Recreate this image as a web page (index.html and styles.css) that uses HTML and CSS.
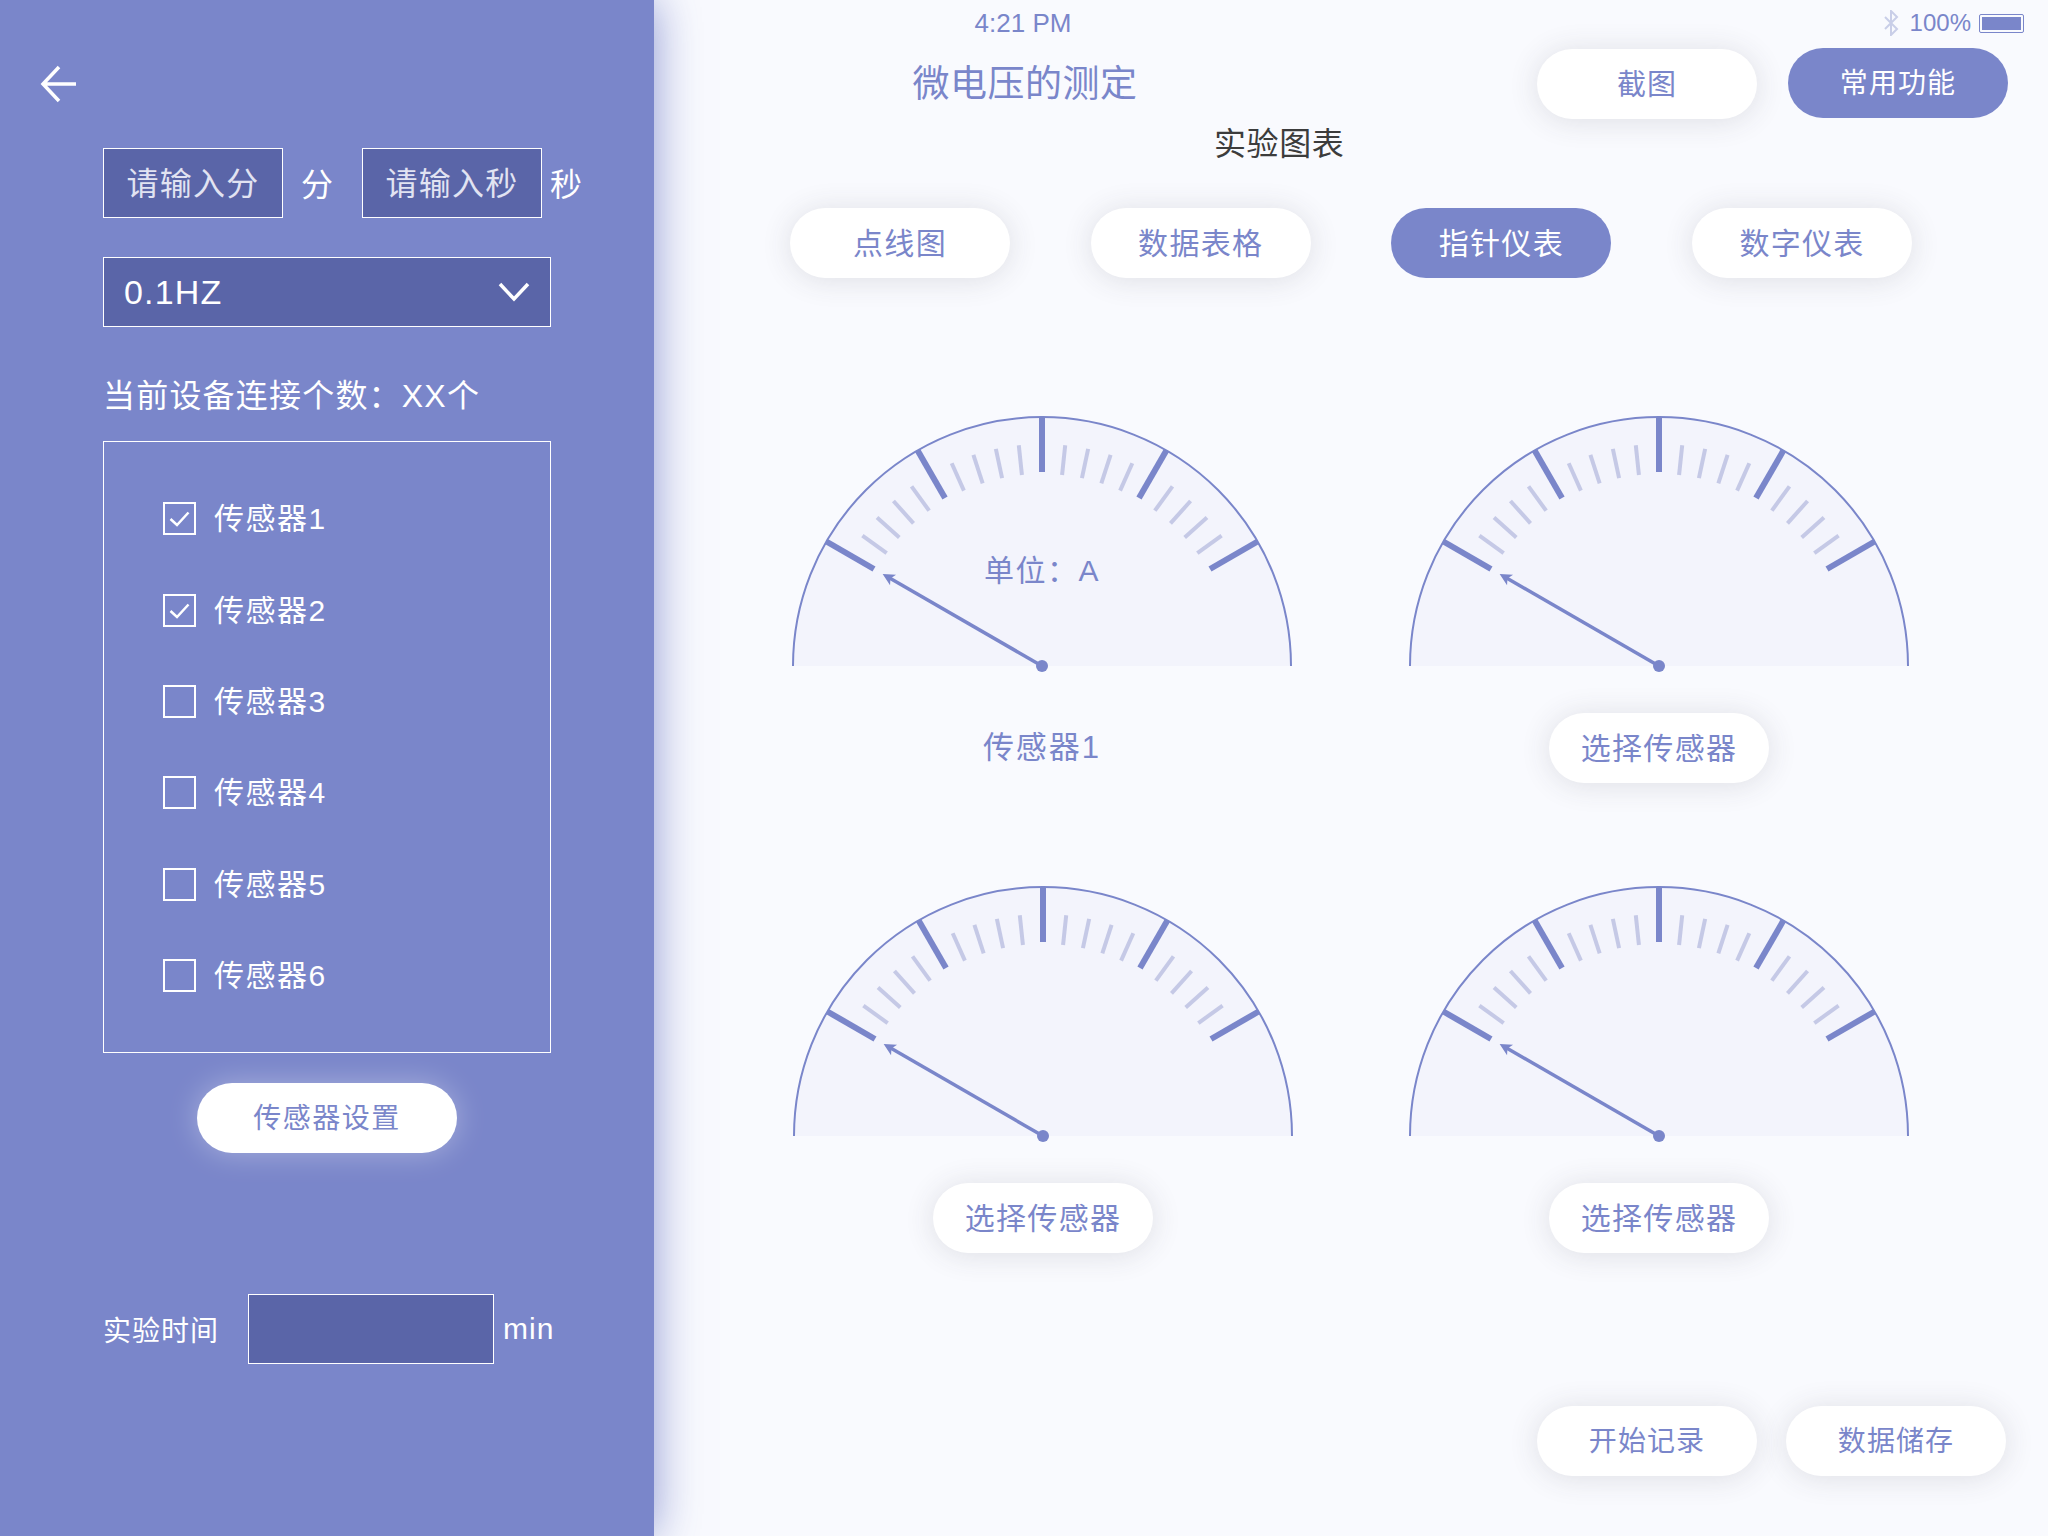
FILE: index.html
```html
<!DOCTYPE html>
<html lang="zh-CN">
<head>
    <meta charset="UTF-8">
    <title>微电压的测定</title>
    <link rel="stylesheet" href="styles.css">
</head>
<body>
    <!-- one gauge, reused four times -->
    <svg class="defs" width="0" height="0">
        <symbol id="gauge" viewBox="0 0 500 256">
            <path class="dial" d="M1 250 A249 249 0 0 1 499 250"/>
            <g class="minor">
                <line x1="250" y1="28" x2="250" y2="58" transform="rotate(-54 250 250)"/>
                <line x1="250" y1="28" x2="250" y2="58" transform="rotate(-48 250 250)"/>
                <line x1="250" y1="28" x2="250" y2="58" transform="rotate(-42 250 250)"/>
                <line x1="250" y1="28" x2="250" y2="58" transform="rotate(-36 250 250)"/>
                <line x1="250" y1="28" x2="250" y2="58" transform="rotate(-24 250 250)"/>
                <line x1="250" y1="28" x2="250" y2="58" transform="rotate(-18 250 250)"/>
                <line x1="250" y1="28" x2="250" y2="58" transform="rotate(-12 250 250)"/>
                <line x1="250" y1="28" x2="250" y2="58" transform="rotate(-6 250 250)"/>
                <line x1="250" y1="28" x2="250" y2="58" transform="rotate(6 250 250)"/>
                <line x1="250" y1="28" x2="250" y2="58" transform="rotate(12 250 250)"/>
                <line x1="250" y1="28" x2="250" y2="58" transform="rotate(18 250 250)"/>
                <line x1="250" y1="28" x2="250" y2="58" transform="rotate(24 250 250)"/>
                <line x1="250" y1="28" x2="250" y2="58" transform="rotate(36 250 250)"/>
                <line x1="250" y1="28" x2="250" y2="58" transform="rotate(42 250 250)"/>
                <line x1="250" y1="28" x2="250" y2="58" transform="rotate(48 250 250)"/>
                <line x1="250" y1="28" x2="250" y2="58" transform="rotate(54 250 250)"/>
            </g>
            <g class="major">
                <line x1="250" y1="1" x2="250" y2="56" transform="rotate(-60 250 250)"/>
                <line x1="250" y1="1" x2="250" y2="56" transform="rotate(-30 250 250)"/>
                <line x1="250" y1="1" x2="250" y2="56"/>
                <line x1="250" y1="1" x2="250" y2="56" transform="rotate(30 250 250)"/>
                <line x1="250" y1="1" x2="250" y2="56" transform="rotate(60 250 250)"/>
            </g>
            <g transform="rotate(-60 250 250)">
                <line class="needle" x1="250" y1="250" x2="250" y2="72"/>
                <path class="tip" d="M250 66 L256 78 L250 75 L244 78 Z"/>
            </g>
            <circle class="tip" cx="250" cy="250" r="6"/>
        </symbol>
    </svg>

    <div class="app">
        <aside class="sidebar">
            <svg class="back" width="38" height="38" viewBox="0 0 38 38">
                <path d="M36 19 H3 M19 2 L3 19 L19 36"/>
            </svg>

            <div class="duration">
                <div class="field field-short">请输入分</div>
                <span class="unit unit-min">分</span>
                <div class="field field-short">请输入秒</div>
                <span class="unit unit-sec">秒</span>
            </div>

            <div class="field select">
                <span>0.1HZ</span>
                <svg width="32" height="20" viewBox="0 0 32 20"><path d="M2 2 L16 17 L30 2"/></svg>
            </div>

            <p class="count">当前设备连接个数：XX个</p>

            <div class="sensor-box">
                <div class="sensor"><span class="check"><svg width="23" height="23" viewBox="0 0 23 23"><path d="M2.5 12 L9 18 L20.5 5.5"/></svg></span>传感器1</div>
                <div class="sensor"><span class="check"><svg width="23" height="23" viewBox="0 0 23 23"><path d="M2.5 12 L9 18 L20.5 5.5"/></svg></span>传感器2</div>
                <div class="sensor"><span class="check"></span>传感器3</div>
                <div class="sensor"><span class="check"></span>传感器4</div>
                <div class="sensor"><span class="check"></span>传感器5</div>
                <div class="sensor"><span class="check"></span>传感器6</div>
            </div>

            <button class="pill pill-glow">传感器设置</button>

            <div class="time-row">
                <span class="time-label">实验时间</span>
                <div class="field field-time"></div>
                <span class="time-unit">min</span>
            </div>
        </aside>

        <main class="main">
            <div class="status">
                <span class="clock">4:21 PM</span>
                <div class="status-right">
                    <svg width="16" height="26" viewBox="0 0 16 26"><path d="M2 7 L14 19 L8 25 V1 L14 7 L2 19"/></svg>
                    <span>100%</span>
                    <span class="battery"><span></span></span>
                </div>
            </div>

            <div class="head">
                <h1>微电压的测定</h1>
                <button class="pill pill-head">截图</button>
                <button class="pill pill-active pill-small">常用功能</button>
            </div>

            <h2>实验图表</h2>

            <div class="tabs">
                <button class="pill">点线图</button>
                <button class="pill">数据表格</button>
                <button class="pill pill-active">指针仪表</button>
                <button class="pill">数字仪表</button>
            </div>

            <div class="gauges">
                <div class="gauge">
                    <svg width="500" height="256"><use href="#gauge"/></svg>
                    <span class="gauge-unit">单位：A</span>
                    <div class="gauge-name">传感器1</div>
                </div>
                <div class="gauge">
                    <svg width="500" height="256"><use href="#gauge"/></svg>
                    <button class="pill">选择传感器</button>
                </div>
                <div class="gauge gauge-nudge">
                    <svg width="500" height="256"><use href="#gauge"/></svg>
                    <button class="pill">选择传感器</button>
                </div>
                <div class="gauge">
                    <svg width="500" height="256"><use href="#gauge"/></svg>
                    <button class="pill">选择传感器</button>
                </div>
            </div>

            <div class="actions">
                <button class="pill pill-small">开始记录</button>
                <button class="pill pill-small">数据储存</button>
            </div>
        </main>
    </div>
</body>
</html>
```

FILE: styles.css
```css
* { box-sizing: border-box; }
html, body { margin: 0; padding: 0; }
body {
    width: 2048px;
    height: 1536px;
    overflow: hidden;
    background: #f9fafe;
    font-family: "Liberation Sans", "Noto Sans CJK SC", sans-serif;
    color: #7a86ca;
}
.defs { display: block; height: 0; }
.app { display: flex; height: 1536px; }

/* Sidebar */
.sidebar {
    width: 654px;
    flex: none;
    padding: 65px 0 0 103px;
    background: #7a86ca;
    box-shadow: 0 0 44px rgba(122, 134, 202, 0.85);
    color: #fff;
    position: relative;
}
.back { display: block; margin: 0 0 45px -63px; }
.back path { fill: none; stroke: #fff; stroke-width: 3.5; }

.field {
    height: 70px;
    background: #5a65a8;
    border: 1.5px solid #fff;
}
.duration { display: flex; align-items: center; height: 70px; }
.field-short {
    width: 180px;
    padding-top: 2px;
    line-height: 67px;
    text-align: center;
    font-size: 32px;
    letter-spacing: 1.3px;
    color: #e1e3f2;
}
.unit { padding-bottom: 3px; font-size: 32px; color: #fff; }
.unit-min { width: 79px; padding-left: 18px; }
.unit-sec { padding-left: 8px; }

.select {
    width: 448px;
    margin-top: 39px;
    padding: 0 20px 0 20px;
    display: flex;
    align-items: center;
    justify-content: space-between;
    font-size: 34px;
    letter-spacing: 1.2px;
}
.select svg path { fill: none; stroke: #fff; stroke-width: 3.5; }

.count {
    margin: 49px 0 0;
    font-size: 32px;
    line-height: 40px;
    letter-spacing: 1.2px;
}

.sensor-box {
    width: 448px;
    height: 612px;
    margin-top: 25px;
    padding: 31px 0 0 59px;
    border: 1.5px solid #fff;
}
.sensor {
    display: flex;
    align-items: center;
    height: 91.4px;
    padding-bottom: 5px;
    font-size: 30px;
    letter-spacing: 1.5px;
}
.check {
    width: 33px;
    height: 33px;
    margin: 5px 18px 0 0;
    border: 2.5px solid #fff;
    display: flex;
    align-items: center;
    justify-content: center;
}
.check svg { flex: none; }
.check path { fill: none; stroke: #fff; stroke-width: 2.5; }

.pill {
    width: 220px;
    height: 70px;
    padding: 0 0 5px;
    border: none;
    border-radius: 35px;
    background: #fff;
    box-shadow: 0 2px 30px rgba(60, 60, 70, 0.14);
    color: #7a86ca;
    font-family: inherit;
    font-size: 30px;
    letter-spacing: 1.3px;
}
.pill-active { background: #7a86ca; color: #fff; box-shadow: none; }
.pill-small { font-size: 28px; letter-spacing: 1.1px; }
.pill-glow {
    display: block;
    width: 260px;
    margin: 30px 0 0 94px;
    font-size: 28px;
    letter-spacing: 1.5px;
    box-shadow: 0 0 30px rgba(255, 255, 255, 0.35);
}

.time-row { display: flex; align-items: center; margin-top: 141px; }
.time-label { width: 145px; font-size: 28px; letter-spacing: 1px; }
.field-time { width: 246px; }
.time-unit { margin-left: 9px; font-size: 30px; letter-spacing: 1px; }

/* Main area */
.main { flex: 1; min-width: 0; }
.status {
    display: flex;
    justify-content: space-between;
    align-items: center;
    height: 46px;
    padding: 0 24px 0 319px;
    font-size: 26px;
}
.clock { width: 100px; text-align: center; }
.status-right { display: flex; align-items: center; gap: 8px; font-size: 24px; }
.status-right svg { margin-right: 3px; }
.status-right svg path { fill: none; stroke: #c9cee8; stroke-width: 2; }
.battery {
    width: 45px;
    height: 19px;
    padding: 2px;
    margin-left: 0;
    border: 1px solid #7a86ca;
    border-radius: 2px;
    display: block;
}
.battery span { display: block; height: 100%; background: #7a86ca; }

.head { display: flex; align-items: center; height: 72px; margin-top: 1px; }
.head h1 {
    width: 741px;
    margin: 0;
    padding: 0 0 4px 1px;
    text-align: center;
    font-size: 37px;
    font-weight: 400;
    letter-spacing: 0.5px;
}
.pill-head { margin: 2px 31px 0 142px; font-size: 29px; letter-spacing: 1px; }

h2 {
    margin: 2px 0 0;
    padding-left: 560px;
    font-size: 32px;
    line-height: 46px;
    font-weight: 400;
    letter-spacing: 0.6px;
    color: #3c3c3c;
}

.tabs { display: flex; gap: 80.7px; margin: 41px 0 0 136px; }

.gauges {
    display: grid;
    grid-template-columns: 500px 500px;
    column-gap: 117px;
    row-gap: 103px;
    margin: 138px 0 0 138px;
}
.gauge {
    position: relative;
    display: flex;
    flex-direction: column;
    align-items: center;
}
.gauge-nudge { margin: 0 -1px 0 1px; }
.gauge > svg { display: block; }
.gauge .pill { margin-top: 41px; }
.gauge-name {
    height: 70px;
    margin-top: 41px;
    line-height: 70px;
    font-size: 31px;
    letter-spacing: 2px;
}
.gauge-unit {
    position: absolute;
    top: 130px;
    left: 0;
    width: 100%;
    text-align: center;
    font-size: 30px;
    letter-spacing: 1.5px;
}
.dial { fill: #f3f4fc; stroke: #7a86ca; stroke-width: 2; }
.major line { stroke: #7a86ca; stroke-width: 6; }
.minor line { stroke: #c5c9e6; stroke-width: 4; }
.needle { stroke: #7a86ca; stroke-width: 3.5; }
.tip { fill: #7a86ca; }

.actions { display: flex; gap: 29px; margin: 153px 0 0 883px; }
```
